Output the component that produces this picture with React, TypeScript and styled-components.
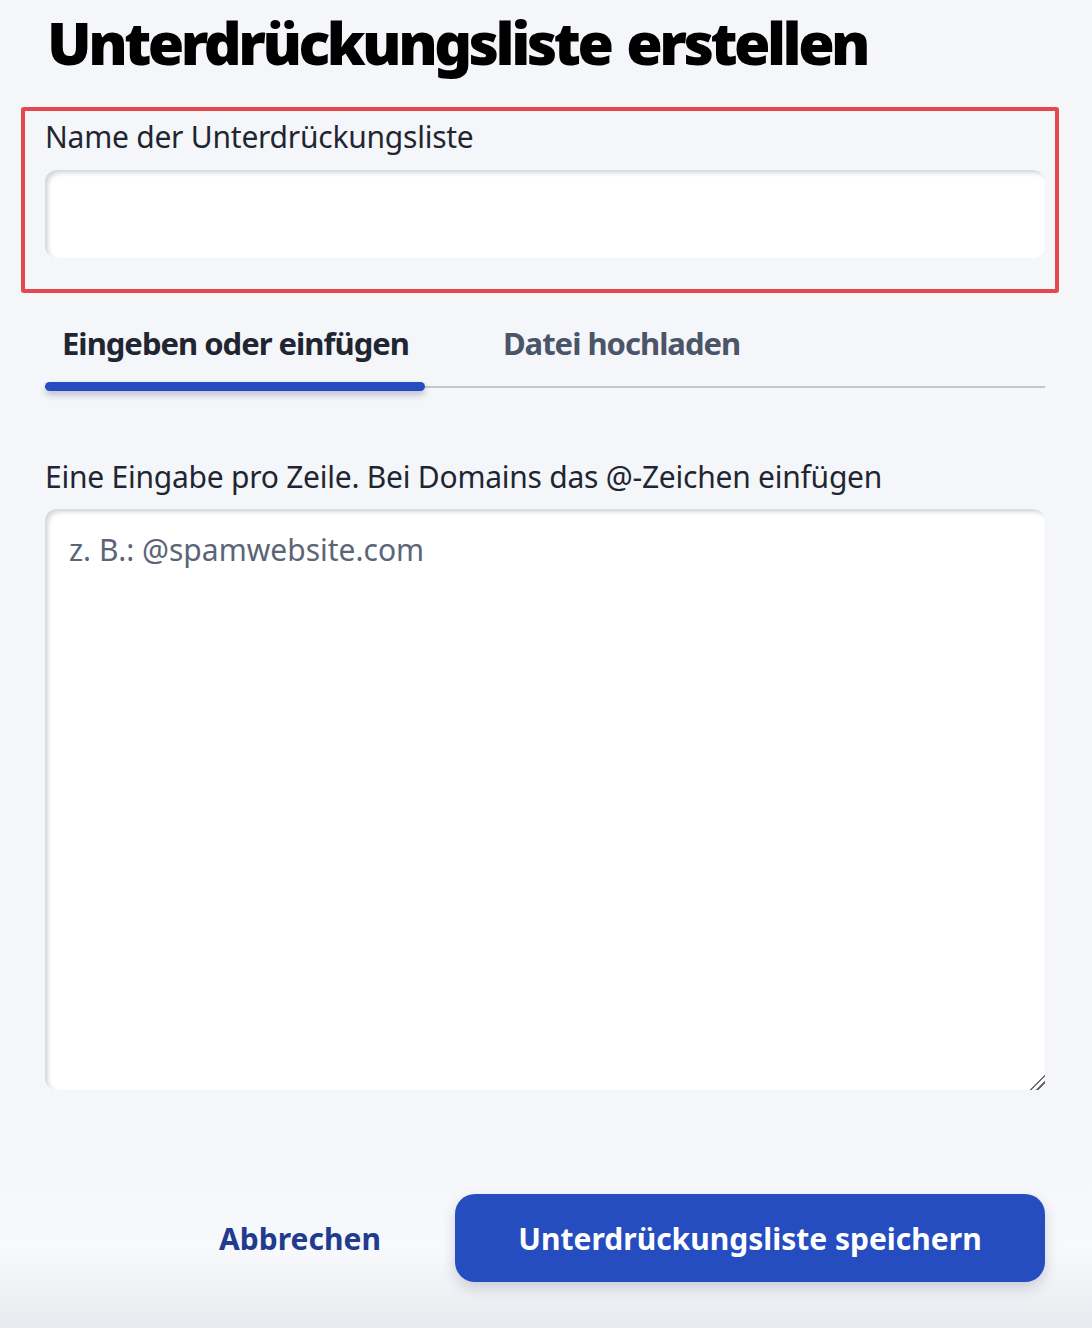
import React, { useState } from "react";
import styled, { createGlobalStyle } from "styled-components";

const GlobalStyle = createGlobalStyle`
  html, body {
    margin: 0;
    padding: 0;
    background: #f5f6fa;
  }
  body {
    font-family: "Noto Sans", "Liberation Sans", Arial, sans-serif;
    color: #1f2632;
  }
  * {
    box-sizing: border-box;
  }
`;

const Page = styled.div`
  display: flex;
  flex-direction: column;
  min-height: 1328px;
  padding: 0 47px 0 45px;
  background: linear-gradient(
    to bottom,
    #f5f6fa 0%,
    #f5f6fa 86%,
    #f8f9fc 94%,
    #e9eaef 100%
  );
`;

const Title = styled.h1`
  margin: 13px 0 0 2px;
  font-size: 59px;
  line-height: 59px;
  font-weight: 900;
  color: #000;
  letter-spacing: -3.5px;
  word-spacing: 4px;
`;

const Highlight = styled.section`
  display: flex;
  flex-direction: column;
  margin: 35px -14px 0 -24px;
  padding: 8px 10px 31px 20px;
  border: 4px solid #e5474f;
  border-radius: 3px;
`;

const FieldLabel = styled.label<{ $gap?: number }>`
  display: block;
  font-size: 30px;
  line-height: 36px;
  font-weight: 400;
  color: #1f2632;
  letter-spacing: -0.24px;
  margin-bottom: ${(p) => p.$gap ?? 15}px;
`;

const inset = `
  border: none;
  outline: none;
  background: #fff;
  border-radius: 12px;
  box-shadow: inset 3px 3px 4px rgba(40, 50, 70, 0.2);
  font-family: inherit;
  font-size: 30px;
  color: #1f2632;
`;

const TextInput = styled.input`
  ${inset}
  width: 100%;
  height: 88px;
  padding: 0 24px;
`;

const TabList = styled.div`
  display: flex;
  gap: 61px;
  margin-top: 30px;
  border-bottom: 2px solid #c5c6ca;
`;

const Tab = styled.button<{ $active?: boolean }>`
  position: relative;
  border: none;
  background: none;
  padding: 0 16px 23px 17px;
  font-family: inherit;
  font-size: 31px;
  line-height: 40px;
  font-weight: 700;
  letter-spacing: -1px;
  color: ${(p) => (p.$active ? "#1f2632" : "#4b5568")};
  cursor: pointer;

  &::after {
    content: "";
    display: ${(p) => (p.$active ? "block" : "none")};
    position: absolute;
    left: 0;
    right: 0;
    bottom: -5px;
    height: 9px;
    border-radius: 5px;
    background: #254dbf;
    box-shadow: 0 4px 6px rgba(30, 40, 70, 0.25);
  }
`;

const HelpBlock = styled.div`
  margin-top: 71px;
  display: flex;
  flex-direction: column;
`;

const EntryArea = styled.textarea`
  ${inset}
  width: 100%;
  height: 581px;
  padding: 23px 24px;
  line-height: 36px;
  resize: vertical;

  &::placeholder {
    color: #5b6577;
    opacity: 1;
  }

  &::-webkit-resizer {
    background: linear-gradient(
      135deg,
      transparent 0 48%,
      #6b6b6b 48% 56%,
      transparent 56% 70%,
      #6b6b6b 70% 78%,
      transparent 78%
    );
  }
`;

const Footer = styled.div`
  display: flex;
  justify-content: flex-end;
  align-items: center;
  margin-top: 104px;
`;

const CancelButton = styled.button`
  width: 310px;
  height: 88px;
  border: none;
  background: none;
  font-family: inherit;
  font-size: 30px;
  font-weight: 700;
  color: #213b8f;
  cursor: pointer;
`;

const SaveButton = styled.button`
  width: 590px;
  height: 88px;
  border: none;
  border-radius: 20px;
  background: #254dbf;
  color: #fff;
  font-family: inherit;
  font-size: 30px;
  font-weight: 700;
  box-shadow: 0 6px 14px rgba(30, 40, 70, 0.18);
  cursor: pointer;
`;

const tabs = ["Eingeben oder einfügen", "Datei hochladen"];

export default function App() {
  const [active, setActive] = useState(0);

  return (
    <>
      <GlobalStyle />
      <Page>
        <Title>Unterdrückungsliste erstellen</Title>

        <Highlight>
          <FieldLabel htmlFor="list-name">Name der Unterdrückungsliste</FieldLabel>
          <TextInput id="list-name" type="text" />
        </Highlight>

        <TabList>
          {tabs.map((t, i) => (
            <Tab key={t} $active={i === active} onClick={() => setActive(i)}>
              {t}
            </Tab>
          ))}
        </TabList>

        <HelpBlock>
          <FieldLabel htmlFor="entries" $gap={14}>
            Eine Eingabe pro Zeile. Bei Domains das @-Zeichen einfügen
          </FieldLabel>
          <EntryArea id="entries" placeholder="z. B.: @spamwebsite.com" />
        </HelpBlock>

        <Footer>
          <CancelButton>Abbrechen</CancelButton>
          <SaveButton>Unterdrückungsliste speichern</SaveButton>
        </Footer>
      </Page>
    </>
  );
}
